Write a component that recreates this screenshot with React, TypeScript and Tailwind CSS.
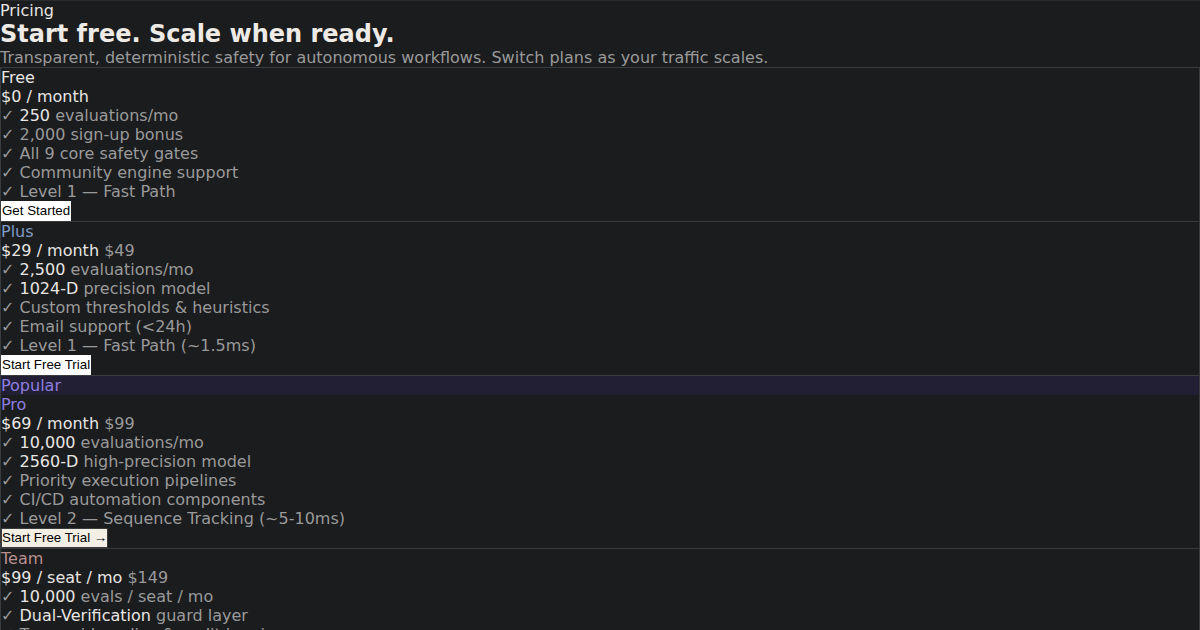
import React from 'react';

type Feature = { strong?: string; rest: string };

interface Plan {
  id: string;
  name: string;
  nameColor: string;
  price: string;
  was?: string;
  features: Feature[];
  cta: string;
  popular?: boolean;
  highlight?: boolean;
}

const plans: Plan[] = [
  {
    id: 'free',
    name: 'Free',
    nameColor: 'text-[#e8e6e3]',
    price: '$0 / month',
    features: [
      { strong: '250', rest: ' evaluations/mo' },
      { rest: '2,000 sign-up bonus' },
      { rest: 'All 9 core safety gates' },
      { rest: 'Community engine support' },
      { rest: 'Level 1 — Fast Path' },
    ],
    cta: 'Get Started',
  },
  {
    id: 'plus',
    name: 'Plus',
    nameColor: 'text-[#7f9ac4]',
    price: '$29 / month',
    was: '$49',
    features: [
      { strong: '2,500', rest: ' evaluations/mo' },
      { strong: '1024-D', rest: ' precision model' },
      { rest: 'Custom thresholds & heuristics' },
      { rest: 'Email support (<24h)' },
      { rest: 'Level 1 — Fast Path (~1.5ms)' },
    ],
    cta: 'Start Free Trial',
  },
  {
    id: 'pro',
    name: 'Pro',
    nameColor: 'text-[#8e7de0]',
    price: '$69 / month',
    was: '$99',
    popular: true,
    highlight: true,
    features: [
      { strong: '10,000', rest: ' evaluations/mo' },
      { strong: '2560-D', rest: ' high-precision model' },
      { rest: 'Priority execution pipelines' },
      { rest: 'CI/CD automation components' },
      { rest: 'Level 2 — Sequence Tracking (~5-10ms)' },
    ],
    cta: 'Start Free Trial →',
  },
  {
    id: 'team',
    name: 'Team',
    nameColor: 'text-[#b88f8f]',
    price: '$99 / seat / mo',
    was: '$149',
    features: [
      { strong: '10,000', rest: ' evals / seat / mo' },
      { strong: 'Dual-Verification', rest: ' guard layer' },
      { rest: 'Team-wide policy & audit logging' },
      { rest: 'Shared dashboards & API keys' },
      { rest: 'Level 2 — Sequence Tracking (~5-10ms)' },
    ],
    cta: 'Contact Sales',
  },
];

const PlanCard: React.FC<{ plan: Plan }> = ({ plan }) => (
  <div className="border border-[#3a3b3d] -mt-px first:mt-0">
    {plan.popular && <div className="bg-[#221f35] text-[#8e7de0]">Popular</div>}
    <div className={plan.nameColor}>{plan.name}</div>
    <div className="text-[#e8e6e3]">
      {plan.price}
      {plan.was && <span className="text-[#9a9a9a]"> {plan.was}</span>}
    </div>
    <ul>
      {plan.features.map((f, i) => (
        <li key={i} className="text-[#9a9a9a]">
          ✓ {f.strong && <span className="text-[#e8e6e3]">{f.strong}</span>}
          {f.rest}
        </li>
      ))}
    </ul>
    <button
      className={`block font-['Liberation_Sans',Arial,sans-serif] text-[13.33px] leading-[16px] text-black px-0 py-px ${
        plan.highlight ? 'bg-[#f4efe4] border border-[#3a3a3a]' : 'bg-white border border-white'
      }`}
    >
      {plan.cta}
    </button>
  </div>
);

export default function App() {
  return (
    <div className="min-h-[630px] bg-[#1b1c1e] font-['DejaVu_Sans',sans-serif] text-base leading-[normal] text-[#e8e6e3] border-t border-[#2a2b2d]">
      <div>Pricing</div>
      <h1 className="text-2xl leading-[normal] font-bold text-[#eeebe6]">Start free. Scale when ready.</h1>
      <p className="text-[#9a9a9a]">
        Transparent, deterministic safety for autonomous workflows. Switch plans as your traffic scales.
      </p>
      <div className="flex flex-col">
        {plans.map((p) => (
          <PlanCard key={p.id} plan={p} />
        ))}
      </div>
    </div>
  );
}
